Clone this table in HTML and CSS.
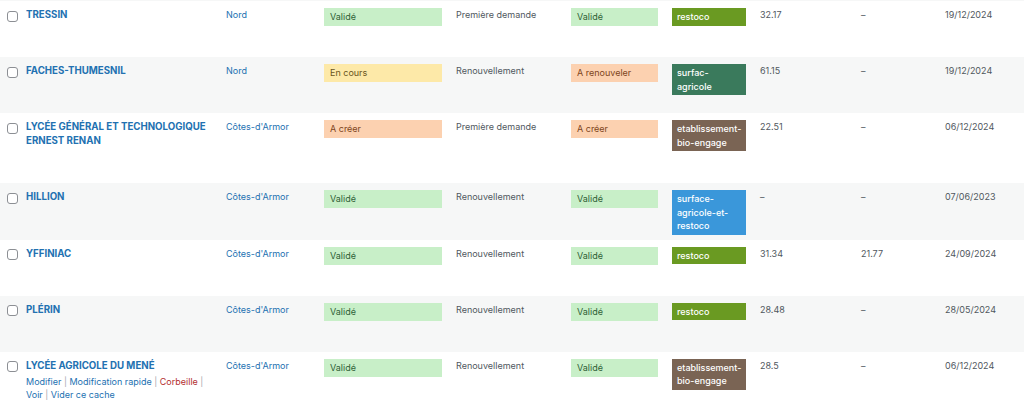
FILE: index.html
```html
<!DOCTYPE html>
<html lang="fr">
<head>
<meta charset="utf-8">
<title>Liste</title>
<link rel="stylesheet" href="styles.css">
</head>
<body>
<div class="prev"></div>
<table class="list">
  <colgroup>
    <col class="c-cb"><col class="c-name"><col class="c-dept"><col class="c-stat"><col class="c-type"><col class="c-stat2"><col class="c-cat"><col class="c-n1"><col class="c-n2"><col class="c-date">
  </colgroup>
  <tbody>
    <tr>
      <td class="cb"><span class="check"></span></td>
      <td><a class="title">TRESSIN</a><div class="actions hidden"><a>Modifier</a> <span class="sep">|</span> <a>Modification rapide</a> <span class="sep">|</span> <a class="trash">Corbeille</a> <span class="sep">|</span> <a>Voir</a> <span class="sep">|</span> <a>Vider ce cache</a></div></td>
      <td><a class="dept">Nord</a></td>
      <td><span class="st st-ok">Validé</span></td>
      <td class="txt">Première demande</td>
      <td><span class="st st-ok">Validé</span></td>
      <td><span class="cat cat-resto">restoco</span></td>
      <td class="txt">32.17</td>
      <td class="txt">–</td>
      <td class="txt">19/12/2024</td>
    </tr>
    <tr>
      <td class="cb"><span class="check"></span></td>
      <td><a class="title">FACHES-THUMESNIL</a><div class="actions hidden"><a>Modifier</a> <span class="sep">|</span> <a>Modification rapide</a> <span class="sep">|</span> <a class="trash">Corbeille</a> <span class="sep">|</span> <a>Voir</a> <span class="sep">|</span> <a>Vider ce cache</a></div></td>
      <td><a class="dept">Nord</a></td>
      <td><span class="st st-wait">En cours</span></td>
      <td class="txt">Renouvellement</td>
      <td><span class="st st-todo">A renouveler</span></td>
      <td><span class="cat cat-surf">surfac-agricole</span></td>
      <td class="txt">61.15</td>
      <td class="txt">–</td>
      <td class="txt">19/12/2024</td>
    </tr>
    <tr>
      <td class="cb"><span class="check"></span></td>
      <td><a class="title">LYCÉE GÉNÉRAL ET TECHNOLOGIQUE ERNEST RENAN</a><div class="actions hidden"><a>Modifier</a> <span class="sep">|</span> <a>Modification rapide</a> <span class="sep">|</span> <a class="trash">Corbeille</a> <span class="sep">|</span> <a>Voir</a> <span class="sep">|</span> <a>Vider ce cache</a></div></td>
      <td><a class="dept">Côtes-d'Armor</a></td>
      <td><span class="st st-todo">A créer</span></td>
      <td class="txt">Première demande</td>
      <td><span class="st st-todo">A créer</span></td>
      <td><span class="cat cat-bio">etablissement-bio-engage</span></td>
      <td class="txt">22.51</td>
      <td class="txt">–</td>
      <td class="txt">06/12/2024</td>
    </tr>
    <tr>
      <td class="cb"><span class="check"></span></td>
      <td><a class="title">HILLION</a><div class="actions hidden"><a>Modifier</a> <span class="sep">|</span> <a>Modification rapide</a> <span class="sep">|</span> <a class="trash">Corbeille</a> <span class="sep">|</span> <a>Voir</a> <span class="sep">|</span> <a>Vider ce cache</a></div></td>
      <td><a class="dept">Côtes-d'Armor</a></td>
      <td><span class="st st-ok">Validé</span></td>
      <td class="txt">Renouvellement</td>
      <td><span class="st st-ok">Validé</span></td>
      <td><span class="cat cat-both">surface-agricole-et-restoco</span></td>
      <td class="txt">–</td>
      <td class="txt">–</td>
      <td class="txt">07/06/2023</td>
    </tr>
    <tr>
      <td class="cb"><span class="check"></span></td>
      <td><a class="title">YFFINIAC</a><div class="actions hidden"><a>Modifier</a> <span class="sep">|</span> <a>Modification rapide</a> <span class="sep">|</span> <a class="trash">Corbeille</a> <span class="sep">|</span> <a>Voir</a> <span class="sep">|</span> <a>Vider ce cache</a></div></td>
      <td><a class="dept">Côtes-d'Armor</a></td>
      <td><span class="st st-ok">Validé</span></td>
      <td class="txt">Renouvellement</td>
      <td><span class="st st-ok">Validé</span></td>
      <td><span class="cat cat-resto">restoco</span></td>
      <td class="txt">31.34</td>
      <td class="txt">21.77</td>
      <td class="txt">24/09/2024</td>
    </tr>
    <tr>
      <td class="cb"><span class="check"></span></td>
      <td><a class="title">PLÉRIN</a><div class="actions hidden"><a>Modifier</a> <span class="sep">|</span> <a>Modification rapide</a> <span class="sep">|</span> <a class="trash">Corbeille</a> <span class="sep">|</span> <a>Voir</a> <span class="sep">|</span> <a>Vider ce cache</a></div></td>
      <td><a class="dept">Côtes-d'Armor</a></td>
      <td><span class="st st-ok">Validé</span></td>
      <td class="txt">Renouvellement</td>
      <td><span class="st st-ok">Validé</span></td>
      <td><span class="cat cat-resto">restoco</span></td>
      <td class="txt">28.48</td>
      <td class="txt">–</td>
      <td class="txt">28/05/2024</td>
    </tr>
    <tr>
      <td class="cb"><span class="check"></span></td>
      <td><a class="title">LYCÉE AGRICOLE DU MENÉ</a><div class="actions"><a>Modifier</a> <span class="sep">|</span> <a>Modification rapide</a> <span class="sep">|</span> <a class="trash">Corbeille</a> <span class="sep">|</span> <a>Voir</a> <span class="sep">|</span> <a>Vider ce cache</a></div></td>
      <td><a class="dept">Côtes-d'Armor</a></td>
      <td><span class="st st-ok">Validé</span></td>
      <td class="txt">Renouvellement</td>
      <td><span class="st st-ok">Validé</span></td>
      <td><span class="cat cat-bio">etablissement-bio-engage</span></td>
      <td class="txt">28.5</td>
      <td class="txt">–</td>
      <td class="txt">06/12/2024</td>
    </tr>
  </tbody>
</table>
</body>
</html>
```
FILE: styles.css
```css
html, body {
  margin: 0;
  padding: 0;
  background: #ffffff;
}
body {
  font-family: Inter, "Liberation Sans", Arial, sans-serif;
  font-size: 9px;
  color: #50575e;
  overflow: hidden;
}
.prev {
  height: 1px;
  background: #f6f7f7;
}
.list {
  width: 1024px;
  table-layout: fixed;
  border-collapse: collapse;
  border-spacing: 0;
}
.c-cb { width: 19px; }
.c-name { width: 200px; }
.c-dept { width: 98px; }
.c-stat { width: 132px; }
.c-type { width: 115px; }
.c-stat2 { width: 101px; }
.c-cat { width: 88px; }
.c-n1 { width: 101px; }
.c-n2 { width: 84px; }
.c-date { width: 86px; }

.list tr:nth-child(even) td {
  background: #f6f7f7;
}
.list td {
  vertical-align: top;
  padding: 7px 7px 4.5px;
  line-height: 14px;
}
.list td.cb {
  padding: 7px 1px 4.5px 7px;
}
.check {
  display: block;
  width: 9px;
  height: 9px;
  margin-top: 2.5px;
  border: 1px solid #8c8f94;
  border-radius: 3px;
  background: #fff;
}
a {
  color: #2271b1;
  text-decoration: none;
}
.title {
  font-weight: 700;
  font-size: 9.7px;
  line-height: 14px;
  display: block;
}
.dept {
  font-size: 9px;
}
.actions {
  padding-top: 3.5px;
  padding-bottom: 2px;
  font-size: 9px;
  line-height: 12.5px;
  color: #a7aaad;
}
.actions.hidden {
  visibility: hidden;
}
.actions .sep {
  color: #a7aaad;
}
.actions .trash {
  color: #b32d2e;
}
.st {
  display: block;
  height: 14px;
  padding: 2px 6px;
  line-height: 14px;
  font-size: 9px;
}
.st-ok {
  background: #c8efc8;
  color: #2f5f37;
}
.st-wait {
  background: #fde9a8;
  color: #6a5520;
}
.st-todo {
  background: #fcd1b0;
  color: #7e4520;
}
.cat {
  display: block;
  padding: 2px 5px;
  line-height: 13.7px;
  font-size: 9px;
  font-weight: 500;
  color: #ffffff;
}
.cat-resto { background: #6a9a22; }
.cat-surf { background: #3a7a5c; }
.cat-bio { background: #7a6454; }
.cat-both { background: #3a97da; }
.txt {
  font-size: 9px;
}
```
